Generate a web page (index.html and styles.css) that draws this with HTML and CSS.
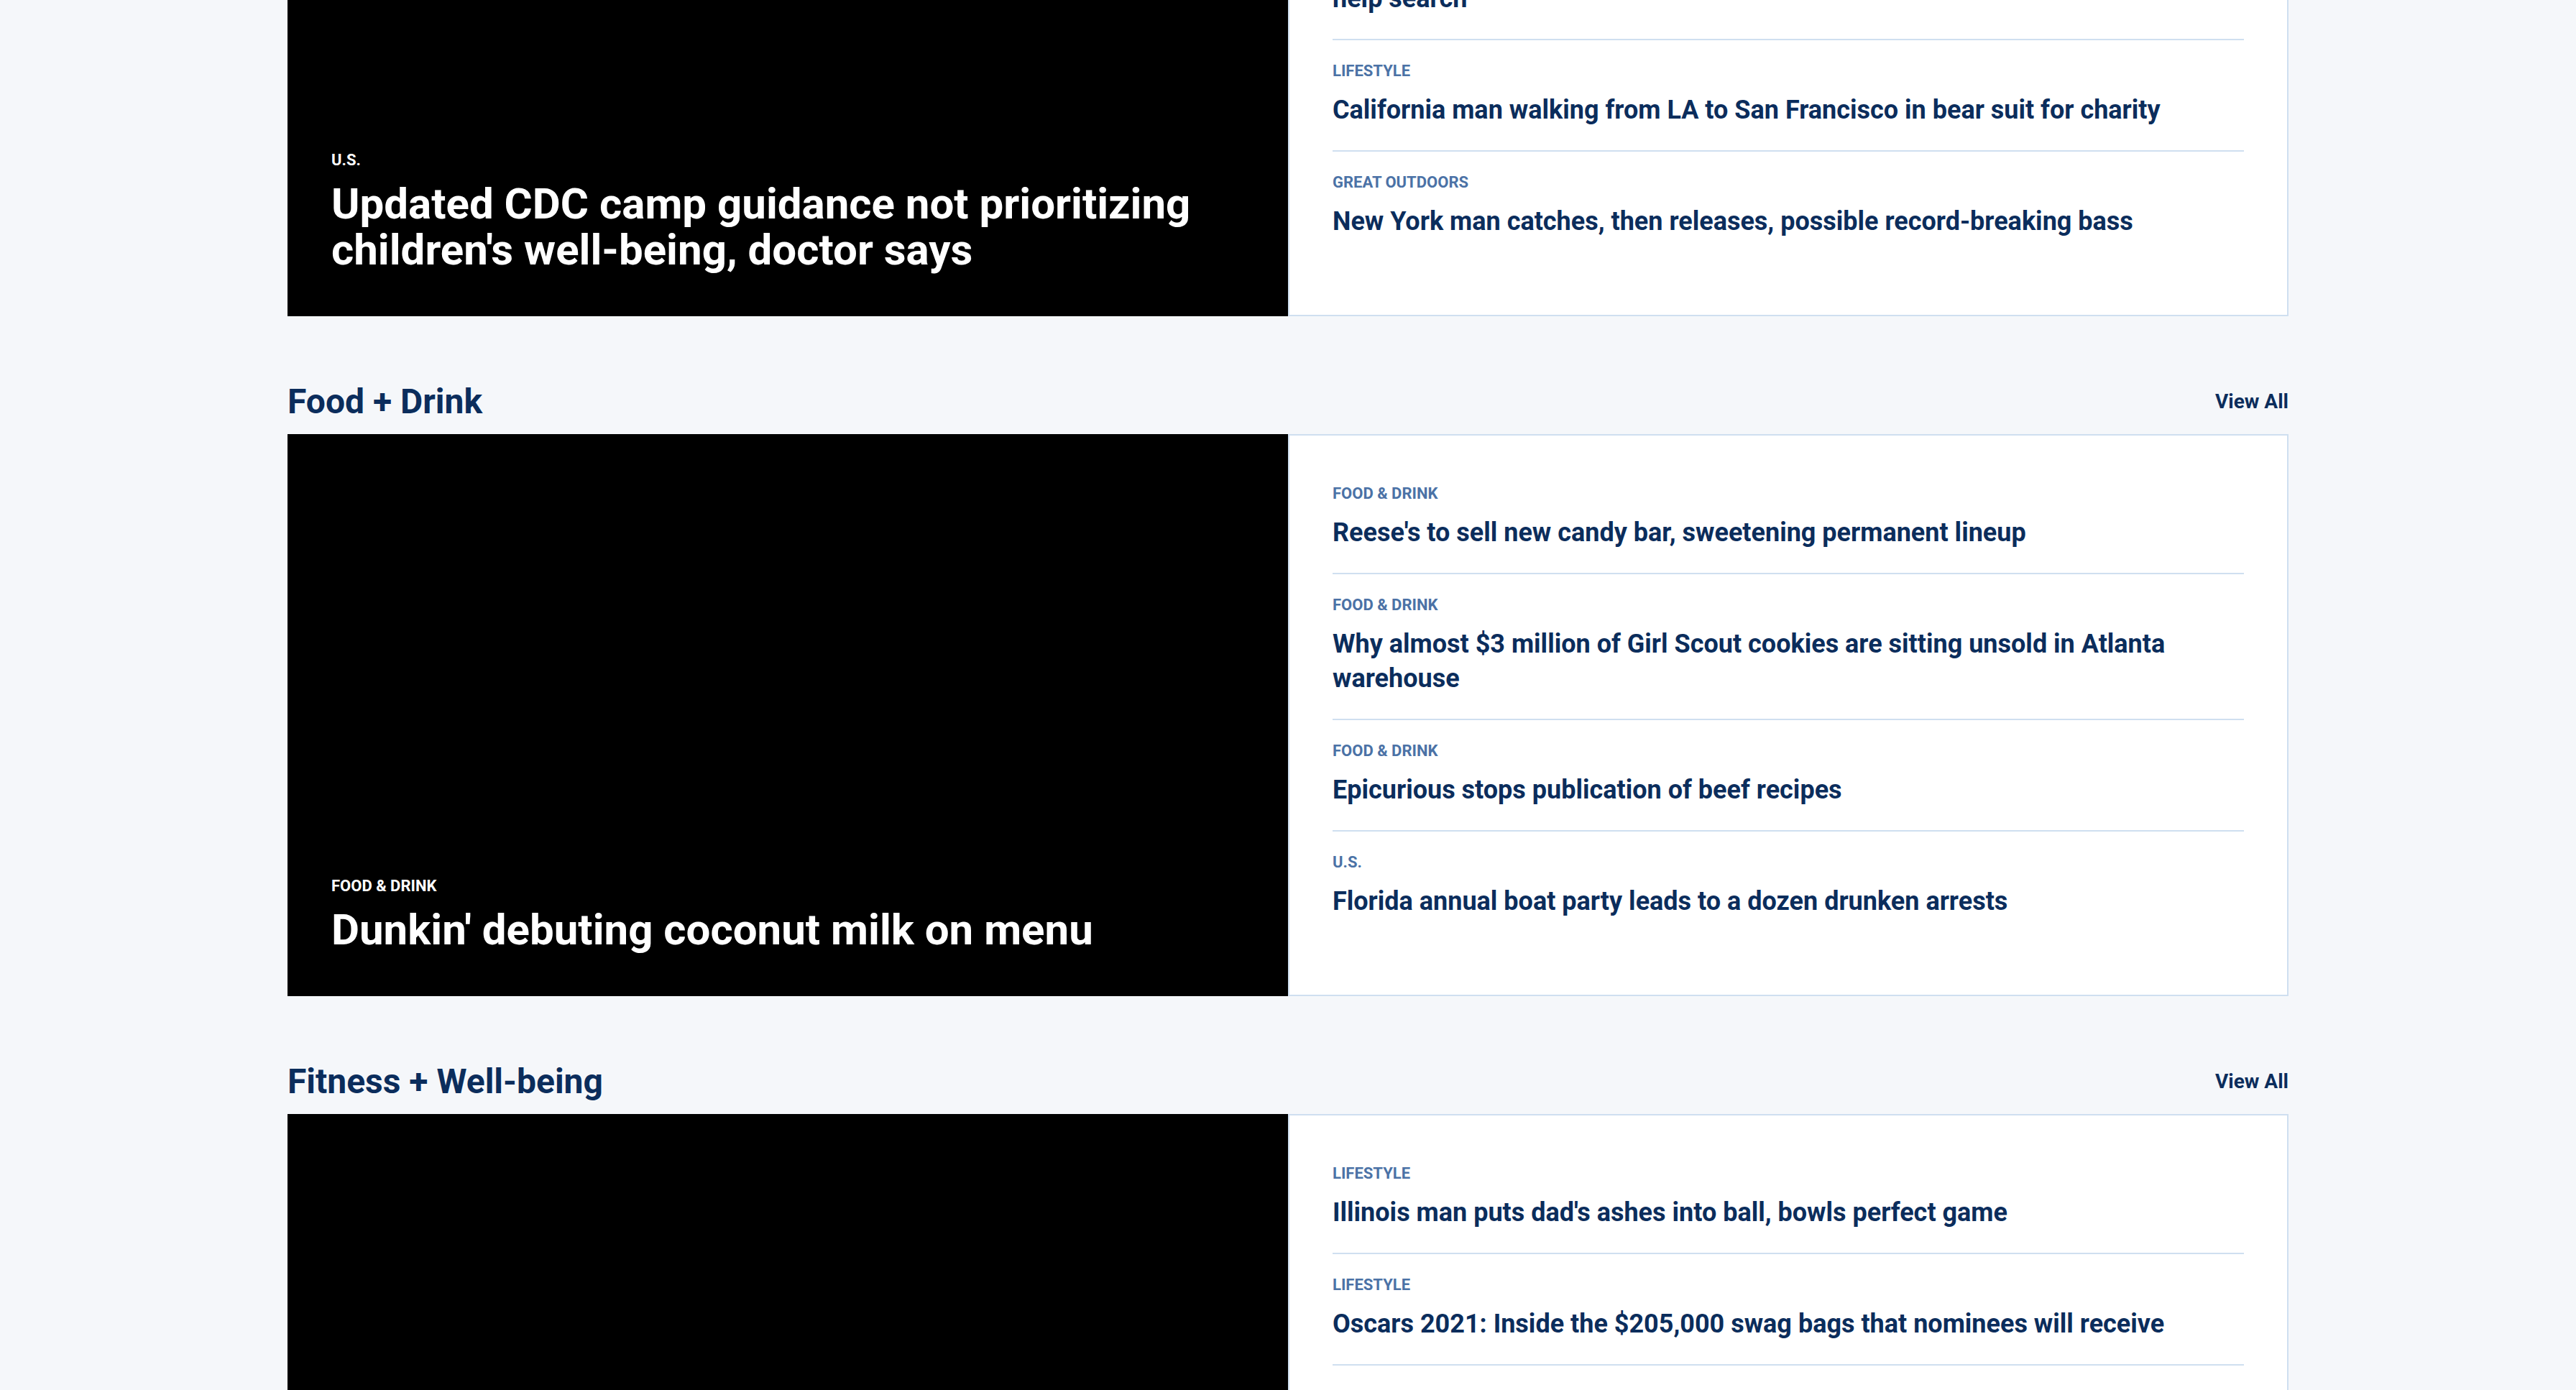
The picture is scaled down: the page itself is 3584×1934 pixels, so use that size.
FILE: index.html
```html
<!DOCTYPE html>
<html lang="en">
<head>
<meta charset="utf-8">
<title>Lifestyle</title>
<link rel="stylesheet" href="styles.css">
</head>
<body>
<main class="page">
  <section class="section">
    <header class="section-head">
      <h2 class="section-title">Lifestyle</h2>
      <a class="view-all" href="#">View All</a>
    </header>
    <div class="card">
      <a class="hero" href="#">
        <div class="hero-text">
          <span class="hero-label">U.S.</span>
          <h3 class="hero-title">Updated CDC camp guidance not prioritizing children's well-being, doctor says</h3>
        </div>
      </a>
      <ul class="list">
        <li class="item"><span class="label">Lifestyle</span><a class="title" href="#">Couple celebrates 70th wedding anniversary with backyard picnic</a></li>
        <li class="item"><span class="label">Great Outdoors</span><a class="title" href="#">Hundreds of volunteers, dogs and drones join weekslong effort in Colorado to help search</a></li>
        <li class="item"><span class="label">Lifestyle</span><a class="title" href="#">California man walking from LA to San Francisco in bear suit for charity</a></li>
        <li class="item"><span class="label">Great Outdoors</span><a class="title" href="#">New York man catches, then releases, possible record-breaking bass</a></li>
      </ul>
    </div>
  </section>

  <section class="section">
    <header class="section-head">
      <h2 class="section-title">Food + Drink</h2>
      <a class="view-all" href="#">View All</a>
    </header>
    <div class="card">
      <a class="hero" href="#">
        <div class="hero-text">
          <span class="hero-label">Food &amp; Drink</span>
          <h3 class="hero-title">Dunkin' debuting coconut milk on menu</h3>
        </div>
      </a>
      <ul class="list">
        <li class="item"><span class="label">Food &amp; Drink</span><a class="title" href="#">Reese's to sell new candy bar, sweetening permanent lineup</a></li>
        <li class="item"><span class="label">Food &amp; Drink</span><a class="title" href="#">Why almost $3 million of Girl Scout cookies are sitting unsold in Atlanta warehouse</a></li>
        <li class="item"><span class="label">Food &amp; Drink</span><a class="title" href="#">Epicurious stops publication of beef recipes</a></li>
        <li class="item"><span class="label">U.S.</span><a class="title" href="#">Florida annual boat party leads to a dozen drunken arrests</a></li>
      </ul>
    </div>
  </section>

  <section class="section">
    <header class="section-head">
      <h2 class="section-title">Fitness + Well-being</h2>
      <a class="view-all" href="#">View All</a>
    </header>
    <div class="card">
      <a class="hero" href="#">
        <div class="hero-text">
          <span class="hero-label">Lifestyle</span>
          <h3 class="hero-title">How to get back into a workout routine after a year at home</h3>
        </div>
      </a>
      <ul class="list">
        <li class="item"><span class="label">Lifestyle</span><a class="title" href="#">Illinois man puts dad's ashes into ball, bowls perfect game</a></li>
        <li class="item"><span class="label">Lifestyle</span><a class="title" href="#">Oscars 2021: Inside the $205,000 swag bags that nominees will receive</a></li>
        <li class="item"><span class="label">Health</span><a class="title" href="#">Study finds short walks after meals may help lower blood sugar</a></li>
        <li class="item"><span class="label">Lifestyle</span><a class="title" href="#">Yoga instructor leads outdoor class for hundreds in city park</a></li>
      </ul>
    </div>
  </section>
</main>
</body>
</html>
```

FILE: styles.css
```css
* {
  box-sizing: border-box;
}

html, body {
  margin: 0;
  padding: 0;
}

body {
  background: #f5f7fa;
  font-family: Roboto, "Liberation Sans", Arial, sans-serif;
  color: #0b2d5c;
}

a {
  text-decoration: none;
  color: inherit;
}

.page {
  width: 2784px;
  margin: -417px auto 0;
  display: flex;
  flex-direction: column;
  gap: 89px;
}

.section-head {
  display: flex;
  align-items: center;
  justify-content: space-between;
  height: 60px;
  margin-bottom: 15px;
}

.section-title {
  margin: 0;
  font-size: 48px;
  line-height: 60px;
  font-weight: 700;
  color: #0b2d5c;
}

.view-all {
  font-size: 28px;
  line-height: 34px;
  font-weight: 700;
  color: #0b2d5c;
}

.card {
  display: grid;
  grid-template-columns: 1392px 1392px;
}

.hero {
  display: flex;
  align-items: flex-end;
  height: 782px;
  background: #000;
  padding: 0 60px 60px 61px;
}

.hero-text {
  display: flex;
  flex-direction: column;
  gap: 16px;
  color: #fff;
}

.hero-label {
  font-size: 22px;
  line-height: 26px;
  font-weight: 700;
  text-transform: uppercase;
}

.hero-title {
  margin: 0;
  font-size: 60px;
  line-height: 64px;
  font-weight: 700;
}

.list {
  list-style: none;
  margin: 0;
  background: #fff;
  border: 2px solid #cfdff0;
  padding: 38px 60px 0;
}

.item {
  display: flex;
  flex-direction: column;
  gap: 17px;
  padding: 30px 0 32px;
  border-bottom: 2px solid #cfdff0;
}

.item:last-child {
  border-bottom: 0;
}

.label {
  font-size: 22px;
  line-height: 26px;
  font-weight: 700;
  text-transform: uppercase;
  color: #4b72a6;
}

.title {
  font-size: 36px;
  line-height: 48px;
  font-weight: 700;
  color: #0b2d5c;
}
```
